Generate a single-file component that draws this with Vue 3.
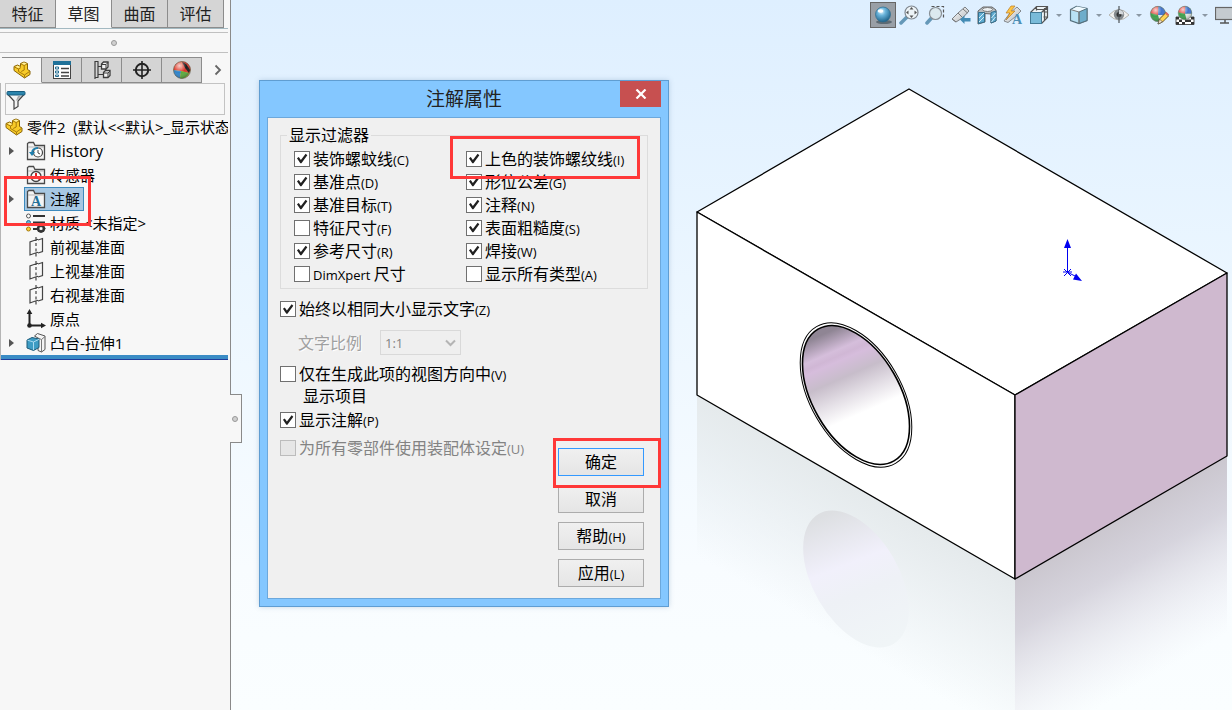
<template>
  <div class="cad-app">
    <!-- набор иконок -->
    <svg class="icon-defs" aria-hidden="true">
      <defs>
        <radialGradient id="ball" cx="0.4" cy="0.3" r="0.75">
          <stop offset="0" stop-color="#e8f8ff" />
          <stop offset="0.35" stop-color="#6bb5dc" />
          <stop offset="1" stop-color="#165a82" />
        </radialGradient>
        <linearGradient id="steel" x1="0" y1="0" x2="1" y2="1">
          <stop offset="0" stop-color="#ffffff" />
          <stop offset="1" stop-color="#b3b7ba" />
        </linearGradient>
        <radialGradient id="shine" cx="0.35" cy="0.25" r="0.8">
          <stop offset="0" stop-color="#fff" stop-opacity="0.75" />
          <stop offset="0.5" stop-color="#fff" stop-opacity="0" />
          <stop offset="1" stop-color="#000" stop-opacity="0.3" />
        </radialGradient>
      </defs>
      <symbol id="part" viewBox="0 0 20 20">
        <path d="M2 6.500L5.500 5l3 1.500V3.500L12 2l3.500 1.500v6L18 11v3.500L12.500 18 2 10.500z" fill="#f8cb28" stroke="#8a6508" />
        <path d="M2.500 7l4 2 2.500-1.500M6.500 9v2.500l6 3.500 5-3.500M12.500 15v2.500M9 4l3.200 1.500L15 4M12.200 5.500V10l-3 1.500" fill="none" stroke="#a77a0c" />
        <path d="M9.500 3.500L12 2.500l2.600 1-2.400 1.300zM3.500 6.700l2-1 2.600 1.300-1.700 1z" fill="#fff0a0" />
      </symbol>
      <symbol id="props" viewBox="0 0 20 20">
        <rect x="1.500" y="1.500" width="17" height="17" fill="#fff" stroke="#444" />
        <rect x="1" y="1" width="18" height="4" fill="#1f7199" />
        <path d="M3.500 7h3v2h-3zM3.500 11h3v2h-3zM3.500 15h3v1.500h-3z" fill="#fff" stroke="#236d91" />
        <path d="M9 8.500h8M9 12.500h8M9 16h8" stroke="#444" stroke-width="1.500" />
      </symbol>
      <symbol id="config" viewBox="0 0 20 20">
        <path d="M3 1v18M3 1.500h3.500M3 17.500h3.500M6 1.500v16M6 6.500h5M6 14.500h5" fill="none" stroke="#3c3c3c" stroke-width="1.200" />
        <path d="M9.500 4l2-2H16v5l-2 2H9.500zM11.500 12.500l2-2H18v5l-2 2h-4.500z" fill="#f2f2f2" stroke="#3c3c3c" stroke-width="1.300" />
        <path d="M10 4.500h4v4M14 4.500l2-2M12 13h4v4M16 13l2-2" fill="none" stroke="#3c3c3c" />
      </symbol>
      <symbol id="target" viewBox="0 0 20 20">
        <circle cx="10" cy="10" r="6.200" fill="none" stroke="#222" stroke-width="2" />
        <path d="M10 1v18M1 10h18" stroke="#222" stroke-width="1.600" />
      </symbol>
      <symbol id="color" viewBox="0 0 20 20">
        <circle cx="10" cy="10" r="8.500" fill="#3e9f4c" />
        <path d="M10 11L1.600 9A8.500 8.500 0 0 1 10.500 1.500z" fill="#e5423a" />
        <path d="M10 11L10.500 1.500A8.500 8.500 0 0 1 18.400 11z" fill="#4173cc" />
        <path d="M10 11h8.400A8.500 8.500 0 0 1 12 18.300z" fill="#e4e6e4" />
        <circle cx="10" cy="10" r="8.500" fill="url(#shine)" stroke="#777" stroke-width="0.600" />
      </symbol>
      <symbol id="appearance" viewBox="0 0 20 20">
        <circle cx="10" cy="10" r="8.500" fill="#f0c43a" />
        <path d="M9 11L1.500 10A8.500 8.500 0 0 1 9.500 1.500z" fill="#df3524" />
        <path d="M9 11L1.500 10A8.500 8.500 0 0 0 8 18.300z" fill="#2f83c9" />
        <path d="M9 11L9.500 1.500A8.500 8.500 0 0 1 18.500 10L17 13z" fill="#d9362a" />
        <path d="M9 11l8 2a8.500 8.500 0 0 1-9 5.500z" fill="#5aaa3d" />
        <path d="M10 2q4 .500 8 8l-1 3Q13 9 10 2z" fill="#1a1a1a" />
        <circle cx="10" cy="10" r="8.500" fill="url(#shine)" stroke="#555" stroke-width="0.600" />
      </symbol>
      <symbol id="filter" viewBox="0 0 20 20">
        <path d="M2 4.500L8 11v8l4-2.500V11l6-6.500z" fill="#f4f4f4" stroke="#444" stroke-width="1.200" />
        <path d="M11 10.500l4-4.500h-3l-2 4.500z" fill="#a8a8a8" />
        <rect x="1" y="1.500" width="18" height="3.500" rx="1" fill="#2c85ad" stroke="#185c7e" />
      </symbol>
      <symbol id="folder" viewBox="0 0 20 20">
        <path d="M1.500 18.500v-16L3 1.500h4.500L9 4.500h9.500v14z" fill="#f4f4f4" stroke="#4a4a4a" stroke-width="1.300" />
        <path d="M2 6h16" stroke="#b5b5b5" />
      </symbol>
      <symbol id="history" viewBox="0 0 20 20">
        <use href="#folder" />
        <circle cx="12" cy="11.500" r="4.500" fill="#fff" stroke="#444" stroke-width="1.200" />
        <path d="M12 9v3l2 1" fill="none" stroke="#444" />
        <path d="M12 7c-4 0-6 2-6 5" fill="none" stroke="#1f7fad" stroke-width="1.800" />
        <path d="M3 11h6l-3 4z" fill="#1f7fad" />
      </symbol>
      <symbol id="sensor" viewBox="0 0 20 20">
        <use href="#folder" />
        <circle cx="10" cy="11.500" r="5" fill="#fff" stroke="#444" stroke-width="1.300" />
        <path d="M10 11.500l4 3M10 8v3" stroke="#d22" stroke-width="2" />
      </symbol>
      <symbol id="material" viewBox="0 0 20 20">
        <path d="M7 3h12M7 9.500h12M7 16h5" stroke="#333" stroke-width="1.800" />
        <circle cx="2.500" cy="3" r="2" fill="#fff" stroke="#555" />
        <circle cx="2.500" cy="9.500" r="2" fill="#64b4d8" stroke="#2a7296" />
        <circle cx="2.500" cy="16" r="2" fill="#ffd034" stroke="#a47c10" />
        <circle cx="15" cy="15.500" r="3" fill="none" stroke="#333" stroke-width="2.600" />
        <path d="M15 10.500v10M10.500 15.500h9M12 12l6 7M18 12l-6 7" stroke="#333" />
        <circle cx="15" cy="15.500" r="1.500" fill="#f7f7f7" />
      </symbol>
      <symbol id="plane" viewBox="0 0 20 20">
        <path d="M8 3.500L4 5v13l4-1.500M12 3l4.500-1.500V14.500L12 16M10 0v4M10 6v3M10 11.500v3M10 16.500v3M8 3.500l4-1.200M8 16.500l4-1.200" fill="none" stroke="#444" stroke-width="1.200" />
      </symbol>
      <symbol id="origin" viewBox="0 0 20 20">
        <path d="M3.500 3v13.500H17" fill="none" stroke="#222" stroke-width="2" />
        <path d="M3.500 0l2.800 5H.7zM20 16.500l-5 2.800v-5.600z" fill="#222" />
        <circle cx="3.500" cy="16.500" r="2.300" fill="#222" />
      </symbol>
      <symbol id="extrude" viewBox="0 0 20 20">
        <path d="M8.500 3l3-2.500L19 3v13.500L15.500 19 12 17.500V5z" fill="#f4f4f4" stroke="#555" />
        <path d="M12 5l3.500 1.500V19M15.500 6.500L19 3.500" fill="none" stroke="#777" />
        <path d="M1 7l5-2.500L13 6v8.500L7.500 17.500 1 15z" fill="#3d9cc4" stroke="#1d5a78" />
        <path d="M1.500 7.200l6 1.800L13 6.300M7.500 9v8" fill="none" stroke="#a9daf0" />
      </symbol>
      <symbol id="sphere" viewBox="0 0 20 20">
        <ellipse cx="11" cy="17" rx="8" ry="2" fill="#5d6a73" />
        <circle cx="10" cy="9.500" r="7.500" fill="url(#ball)" stroke="#2b6c8e" stroke-width="0.700" />
        <ellipse cx="7.500" cy="6" rx="2.800" ry="1.800" fill="#fff" />
      </symbol>
      <symbol id="zoomfit" viewBox="0 0 20 20">
        <path d="M8 12l-6 6" stroke="#6598b8" stroke-width="3.500" stroke-linecap="round" />
        <circle cx="12.500" cy="7.500" r="6.500" fill="#edf4f8" stroke="#808890" stroke-width="1.200" />
        <path d="M12.500 2l2 2.500h-4zM12.500 13l2-2.500h-4zM7 7.500l2.500-2v4zM18 7.500l-2.500-2v4z" fill="#555" />
      </symbol>
      <symbol id="zoomarea" viewBox="0 0 20 20">
        <path d="M6.500 1.500h12v12" fill="none" stroke="#555" stroke-width="1.200" stroke-dasharray="3 2" />
        <path d="M6.500 13l-4.500 5" stroke="#6598b8" stroke-width="3.500" stroke-linecap="round" />
        <circle cx="10.500" cy="8.500" r="6" fill="#dce9ef" stroke="#888f95" stroke-width="1.200" />
      </symbol>
      <symbol id="prevview" viewBox="0 0 20 20">
        <path d="M1 14l6-6 7-6 4 4-6 6.500-7 4.500z" fill="url(#steel)" stroke="#7b7f83" />
        <path d="M7 8l4.500 4.500M12 4l4.500 4M1 14l4 3" stroke="#777" />
        <path d="M9 14.500l4.500-4v2.500h6v3.500h-6V19z" fill="#448cb5" />
      </symbol>
      <symbol id="section" viewBox="0 0 20 20">
        <path d="M1 6l5-4h9l4 3v11l-5 2V9L8 8.500V17l-7 2z" fill="#b9bdc0" stroke="#666" />
        <path d="M1.500 7.500h6V17l-6 1.500zM14 7.500l5-1.500v10l-5 2z" fill="#5eabd0" stroke="#356f8d" />
        <path d="M2 13l5-5M2 17l5-5M14.500 13l4-5M14.500 17l4-5" stroke="#d2edf9" />
        <ellipse cx="10.500" cy="4.500" rx="5" ry="2" fill="#edf1f3" stroke="#777" />
      </symbol>
      <symbol id="annoview" viewBox="0 0 20 20">
        <path d="M1 16l6-8 7-6 4 4-6 6-7 5.500z" fill="url(#steel)" stroke="#85898d" />
        <path d="M8 1L3 8h4l-4 7 9-9H8l4-5z" fill="#ffc543" stroke="#b97c27" stroke-width="0.700" />
      </symbol>
      <symbol id="orient" viewBox="0 0 20 20">
        <path d="M1.500 7.500l6-6h11v11l-6 6M7.500 1.500v4M12.500 7.500l6-6M14.500 7h4M14.500 12h4M15.500 3v12M7.500 4.500h11" fill="#eef5f8" stroke="#555" stroke-width="1.200" />
        <rect x="1.500" y="7.500" width="11" height="11" fill="#79bbd9" stroke="#427994" />
      </symbol>
      <symbol id="display" viewBox="0 0 20 20">
        <path d="M1.500 4.500l6-3L18 3.500v12l-8 3-8.500-3z" fill="#b8e1f4" stroke="#55707d" stroke-width="1.200" />
        <path d="M2 5l8 2 8-3.500-10-2z" fill="#effaff" />
        <path d="M10 7l8-3.500v12l-8 3z" fill="#6eadcb" stroke="#55707d" />
        <path d="M1.500 4.500L10 7v11.500" fill="none" stroke="#777" />
      </symbol>
      <symbol id="eye" viewBox="0 0 20 20">
        <path d="M0 10Q10-1 20 10 10 20 0 10z" fill="#f1f1ef" stroke="#b5b5b0" />
        <circle cx="10" cy="9.500" r="5.200" fill="#858b8e" />
        <circle cx="10" cy="9.500" r="2.500" fill="#333" />
        <path d="M10 1v17" stroke="#4e5459" stroke-width="1.200" />
        <path d="M10 5a4.500 4.500 0 0 1 4.500 4.500L10 9z" fill="#d6dadc" />
      </symbol>
      <symbol id="paint" viewBox="0 0 20 20">
        <svg x="0" y="0" width="18" height="18" viewBox="0 0 20 20"><use href="#color" /></svg>
        <path d="M9 19l1.500-5L17 7.500l3 3L13.500 17z" fill="#ffd353" stroke="#6c5520" />
        <path d="M9 19l1.500-5 3 3z" fill="#f9e5c8" stroke="#555" stroke-width="0.700" />
        <path d="M16 8.500l1.500-1.500 2.500 2.500-1.500 1.500z" fill="#dd6c63" />
      </symbol>
      <symbol id="scene" viewBox="0 0 20 20">
        <path d="M1 12h18v7.500H1z" fill="#fff" stroke="#555" />
        <path d="M1 12h3v2.500H1zM16 12h3v2.500h-3zM4 14.500h3V17H4zM13 14.500h3V17h-3zM1 17h3v2.500H1zM7 17h3v2.500H7zM16 17h3v2.500h-3zM10 14.500h3V17h-3z" fill="#333" />
        <svg x="2" y="0" width="16" height="16" viewBox="0 0 20 20"><use href="#color" /></svg>
      </symbol>
      <symbol id="monitor" viewBox="0 0 20 20">
        <rect x="0.500" y="2.500" width="19" height="12" fill="#c5cbd0" stroke="#666" stroke-width="1.200" />
        <path d="M10 15v3M5 18h9" stroke="#555" stroke-width="1.500" />
      </symbol>
    </svg>

    <aside class="sidebar">
      <nav class="ribbon-tabs">
        <button v-for="tab in ribbonTabs" :key="tab" class="ribbon-tab" :class="{ active: tab === activeRibbon }" @click="activeRibbon = tab">{{ tab }}</button>
      </nav>
      <div class="grip"><span class="dot"></span></div>

      <nav class="manager-tabs">
        <button v-for="tab in managerTabs" :key="tab" class="manager-tab" :class="{ active: tab === activeManager }" :aria-label="tab" @click="activeManager = tab">
          <svg class="icon"><use :href="'#' + tab" /></svg>
        </button>
        <button class="more-tabs" aria-label="more">
          <svg width="8" height="12" viewBox="0 0 8 12"><path d="M1.500 1.500L6 6l-4.500 4.500" fill="none" stroke="#666" stroke-width="1.800" /></svg>
        </button>
      </nav>

      <div class="tree-panel">
        <div class="tree-filter"><svg class="icon"><use href="#filter" /></svg></div>
        <div class="tree-root">
          <svg class="icon"><use href="#part" /></svg>
          <span>零件2&nbsp; (默认&lt;&lt;默认&gt;_显示状态</span>
        </div>
        <ul class="tree">
          <li v-for="item in treeItems" :key="item.text" class="tree-item">
            <button v-if="item.expandable" class="expander" aria-label="expand"></button>
            <span v-else class="expander-space"></span>
            <span class="tree-label" :class="{ selected: item.selected, latin: item.latin }">
              <svg class="icon" viewBox="0 0 20 20">
                <use :href="'#' + item.icon" />
                <text v-if="item.letter" x="10" y="17" text-anchor="middle" class="icon-letter">{{ item.letter }}</text>
              </svg>
              <span>{{ item.text }}</span>
            </span>
            <span v-if="item.selected" class="mark mark-tree"></span>
          </li>
        </ul>
        <div class="rollback-bar"></div>
      </div>
      <button class="collapse-handle" aria-label="collapse"><span class="dot"></span></button>
    </aside>

    <main class="viewport">
      <svg class="model" viewBox="231 0 1001 710" preserveAspectRatio="xMaxYMin meet">
        <defs>
          <!-- эллипсы повёрнуты на 60°, поэтому градиенты поворачиваем обратно -->
          <linearGradient id="hole" gradientUnits="userSpaceOnUse" x1="830" y1="327" x2="870" y2="418" gradientTransform="rotate(-60 856 395)">
            <stop offset="0.040" stop-color="#8f8594" />
            <stop offset="0.240" stop-color="#d5bedb" />
            <stop offset="0.300" stop-color="#d0b7d5" />
            <stop offset="0.350" stop-color="#d6bddc" />
            <stop offset="0.520" stop-color="#c7bdca" />
            <stop offset="0.720" stop-color="#e4dfe6" />
            <stop offset="0.920" stop-color="#ffffff" />
          </linearGradient>
          <linearGradient id="reflectLeft" gradientUnits="userSpaceOnUse" x1="697" y1="395" x2="627" y2="516">
            <stop offset="0" stop-color="#e5eaec" />
            <stop offset="1" stop-color="#e5eaec" stop-opacity="0" />
          </linearGradient>
          <linearGradient id="reflectRight" gradientUnits="userSpaceOnUse" x1="1015" y1="579" x2="1092" y2="712">
            <stop offset="0" stop-color="#cbc7cf" />
            <stop offset="0.300" stop-color="#cbc7d2" stop-opacity="0.750" />
            <stop offset="1" stop-color="#e5e3ec" stop-opacity="0" />
          </linearGradient>
          <linearGradient id="reflectHole" gradientUnits="userSpaceOnUse" x1="828" y1="514" x2="880" y2="646" gradientTransform="rotate(-60 856 579)">
            <stop offset="0" stop-color="#dddfe2" />
            <stop offset="0.380" stop-color="#f1f0fb" />
            <stop offset="0.600" stop-color="#eef1f6" />
            <stop offset="1" stop-color="#f0f5f7" />
          </linearGradient>
        </defs>
        <polygon points="697,395 1015,579 1015,710 697,710" fill="url(#reflectLeft)" />
        <polygon points="1015,579 1227,456 1227,710 1015,710" fill="url(#reflectRight)" />
        <ellipse cx="856" cy="579" rx="75" ry="43" transform="rotate(60 856 579)" fill="url(#reflectHole)" />
        <g stroke="#000" stroke-width="1.300" stroke-linejoin="round">
          <polygon points="909,89 1227,273 1015,395 697,212" fill="#fff" />
          <polygon points="697,212 1015,395 1015,579 697,395" fill="#fff" />
          <polygon points="1015,395 1227,273 1227,456 1015,579" fill="#cfb9cf" />
        </g>
        <ellipse cx="856" cy="395" rx="79" ry="45.500" transform="rotate(60 856 395)" fill="#fff" stroke="#000" />
        <ellipse cx="856" cy="395" rx="76" ry="43.500" transform="rotate(60 856 395)" fill="url(#hole)" stroke="#000" stroke-width="1.600" />
        <g stroke="#0000f0" fill="#0000f0">
          <path d="M1067.500 272V246M1067 272l10 5M1063 272h9M1064 269l7 7M1071 269l-7 7" fill="none" />
          <path d="M1067.500 239l3.500 9h-7zM1082 281l-9-1.500 3-6z" stroke="none" />
        </g>
      </svg>

      <div class="view-toolbar">
        <template v-for="tool in viewTools" :key="tool.icon">
          <button class="tool" :class="{ pressed: tool.pressed }" :aria-label="tool.icon">
            <svg class="icon" viewBox="0 0 20 20">
              <use :href="'#' + tool.icon" />
              <text v-if="tool.letter" x="14" y="19" text-anchor="middle" class="icon-letter tool-letter">{{ tool.letter }}</text>
            </svg>
          </button>
          <button v-if="tool.menu" class="tool-menu" aria-label="menu"></button>
        </template>
      </div>

      <section v-if="dialogOpen" class="dialog" role="dialog" aria-labelledby="dialog-title">
        <header class="dialog-header">
          <h1 id="dialog-title" class="dialog-title">注解属性</h1>
          <button class="dialog-close" aria-label="close" @click="dialogOpen = false">
            <svg width="12" height="10" viewBox="0 0 12 10"><path d="M1.500 0.500l9 9M10.500 0.500l-9 9" stroke="#fff" stroke-width="2.200" /></svg>
          </button>
        </header>
        <div class="dialog-body">
          <fieldset class="filters">
            <legend>显示过滤器</legend>
            <div class="filter-grid">
              <label v-for="item in filters" :key="item.text" class="check">
                <input v-model="item.checked" type="checkbox" />
                <span><small v-if="item.prefix">{{ item.prefix }}&nbsp;</small>{{ item.text }}<small v-if="item.hotkey">({{ item.hotkey }})</small></span>
                <span v-if="item.marked" class="mark mark-filter"></span>
              </label>
            </div>
          </fieldset>

          <div class="dialog-columns">
            <div class="options">
              <label class="check">
                <input v-model="sameSize" type="checkbox" />
                <span>始终以相同大小显示文字<small>(Z)</small></span>
              </label>
              <div class="scale-row">
                <label for="text-scale">文字比例</label>
                <div class="select-wrap">
                  <select id="text-scale" disabled>
                    <option>1:1</option>
                  </select>
                  <svg width="11" height="8" viewBox="0 0 11 8"><path d="M1 1.500l4.500 4.500L10 1.500" fill="none" stroke="#b4b4b4" stroke-width="2" /></svg>
                </div>
              </div>
              <label class="check two-line">
                <input v-model="viewOnly" type="checkbox" />
                <span>仅在生成此项的视图方向中<small>(V)</small><span class="second-line">显示项目</span></span>
              </label>
              <label class="check">
                <input v-model="showNotes" type="checkbox" />
                <span>显示注解<small>(P)</small></span>
              </label>
              <label class="check disabled">
                <input type="checkbox" disabled />
                <span>为所有零部件使用装配体设定<small>(U)</small></span>
              </label>
            </div>
            <div class="actions">
              <button v-for="action in actions" :key="action.text" class="action" :class="{ primary: action.primary }">
                {{ action.text }}<small v-if="action.hotkey">({{ action.hotkey }})</small>
                <span v-if="action.primary" class="mark mark-action"></span>
              </button>
            </div>
          </div>
        </div>
      </section>
    </main>
  </div>
</template>

<script setup>
import { ref } from 'vue'

const ribbonTabs = ['特征', '草图', '曲面', '评估']
const activeRibbon = ref('草图')

const managerTabs = ['part', 'props', 'config', 'target', 'appearance']
const activeManager = ref('part')

const treeItems = [
  { icon: 'history', text: 'History', latin: true, expandable: true },
  { icon: 'sensor', text: '传感器' },
  { icon: 'folder', letter: 'A', text: '注解', expandable: true, selected: true },
  { icon: 'material', text: '材质 <未指定>' },
  { icon: 'plane', text: '前视基准面' },
  { icon: 'plane', text: '上视基准面' },
  { icon: 'plane', text: '右视基准面' },
  { icon: 'origin', text: '原点' },
  { icon: 'extrude', text: '凸台-拉伸1', expandable: true }
]

const viewTools = [
  { icon: 'sphere', pressed: true },
  { icon: 'zoomfit' },
  { icon: 'zoomarea' },
  { icon: 'prevview' },
  { icon: 'section' },
  { icon: 'annoview', letter: 'A' },
  { icon: 'orient', menu: true },
  { icon: 'display', menu: true },
  { icon: 'eye', menu: true },
  { icon: 'paint' },
  { icon: 'scene', menu: true },
  { icon: 'monitor' }
]

// порядок: левая колонка сверху вниз, затем правая
const filters = ref([
  { text: '装饰螺蚊线', hotkey: 'C', checked: true },
  { text: '基准点', hotkey: 'D', checked: true },
  { text: '基准目标', hotkey: 'T', checked: true },
  { text: '特征尺寸', hotkey: 'F', checked: false },
  { text: '参考尺寸', hotkey: 'R', checked: true },
  { prefix: 'DimXpert', text: '尺寸', checked: false },
  { text: '上色的装饰螺纹线', hotkey: 'I', checked: true, marked: true },
  { text: '形位公差', hotkey: 'G', checked: true },
  { text: '注释', hotkey: 'N', checked: true },
  { text: '表面粗糙度', hotkey: 'S', checked: true },
  { text: '焊接', hotkey: 'W', checked: true },
  { text: '显示所有类型', hotkey: 'A', checked: false }
])

const actions = [
  { text: '确定', primary: true },
  { text: '取消' },
  { text: '帮助', hotkey: 'H' },
  { text: '应用', hotkey: 'L' }
]

const dialogOpen = ref(true)
const sameSize = ref(true)
const viewOnly = ref(false)
const showNotes = ref(true)
</script>

<style>
body {
  margin: 0;
}
</style>

<style scoped>
.cad-app {
  display: flex;
  min-height: 100vh;
  font-family: 'Open Sans', 'Noto Sans CJK SC', sans-serif;
  font-size: 16px;
  line-height: 22px;
  color: #000;
}

.cad-app *,
.cad-app *::before {
  box-sizing: border-box;
}

button {
  padding: 0;
  border: 0;
  background: none;
  font: inherit;
  color: inherit;
}

.icon-defs {
  position: absolute;
  width: 0;
  height: 0;
}

.icon {
  width: 20px;
  height: 20px;
  flex: none;
}

.icon-letter {
  font-family: 'Liberation Serif', serif;
  font-size: 14px;
  font-weight: 700;
  fill: #236f98;
}

.tool-letter {
  fill: #4d8fb6;
}

.dot {
  width: 6px;
  height: 6px;
  border: 1px solid #999;
  border-radius: 50%;
  background: #d0d0d0;
}

/* левая панель */
.sidebar {
  position: relative;
  width: 231px;
  flex: none;
  border-right: 1px solid #8a8a8a;
  background: #f7f7f7;
}

.ribbon-tabs {
  display: flex;
  height: 29px;
  margin-right: 2px;
  border-bottom: 1px solid #a3b9c1;
}

.ribbon-tab {
  width: 56px;
  border-right: 1px solid #8c8c8c;
  border-bottom: 1px solid #8c8c8c;
  background: #d5d5d5;
  color: #222;
}

.ribbon-tab.active {
  background: #f7f7f7;
  border-bottom-color: #f7f7f7;
}

.grip {
  display: flex;
  align-items: center;
  justify-content: center;
  height: 21px;
  margin: 3px 2px 0 0;
  border-top: 1px solid #c0c0c0;
  border-bottom: 1px solid #c0c0c0;
}

.manager-tabs {
  display: flex;
  height: 26px;
  margin: 4px 2px 0 2px;
}

.manager-tab {
  display: flex;
  align-items: center;
  justify-content: center;
  width: 40px;
  border: 1px solid #8c8c8c;
  border-left: 0;
  background: #d4d4d4;
}

.manager-tab.active {
  border-bottom-color: transparent;
  background: #f7f7f7;
}

.more-tabs {
  flex: 1;
  padding-left: 6px;
}

.tree-panel {
  padding-right: 2px;
  border-left: 1px solid #b5b5b5;
}

.tree-filter {
  height: 32px;
  margin: 0 3px 0 4px;
  padding: 6px 0;
  border: 1px solid #c3c3c3;
}

.tree-root {
  display: flex;
  align-items: center;
  gap: 3px;
  height: 24px;
  padding-left: 3px;
  overflow: hidden;
  font-size: 15px;
  white-space: nowrap;
}

.tree {
  margin: 0;
  padding: 0;
  list-style: none;
  font-size: 15px;
}

.tree-item {
  position: relative;
  display: flex;
  align-items: center;
  height: 24px;
}

.expander,
.expander-space {
  width: 5px;
  height: 8px;
  margin: 0 10px 0 8px;
}

.expander {
  background: #555;
  clip-path: polygon(0 0, 100% 50%, 0 100%);
}

.tree-label {
  display: flex;
  align-items: center;
  gap: 4px;
  height: 24px;
  padding: 0 3px 0 1px;
  border: 1px solid transparent;
  white-space: nowrap;
}

.tree-label.latin {
  font-size: 16px;
}

.tree-label.selected {
  border-color: #3d8abd;
  background: #a7c8e3;
}

.rollback-bar {
  height: 5px;
  border-bottom: 1px solid #1f3d9c;
  background: #3a8cc5;
}

.collapse-handle {
  position: absolute;
  top: 394px;
  right: -12px;
  z-index: 1;
  display: flex;
  align-items: center;
  padding-left: 2px;
  width: 12px;
  height: 49px;
  border: 1px solid #8a8a8a;
  border-left: 0;
  background: #f7f7f7;
}

/* красные рамки */
.mark {
  position: absolute;
  z-index: 2;
  border: 3px solid #ff3838;
  pointer-events: none;
}

.mark-tree {
  top: -11px;
  left: 3px;
  width: 87px;
  height: 50px;
}

.mark-filter {
  top: -11px;
  left: -16px;
  width: 190px;
  height: 43px;
}

.mark-action {
  inset: -11px -18px -13px -6px;
}

/* рабочая область */
.viewport {
  position: relative;
  flex: 1;
  min-width: 0;
  background: linear-gradient(#deefff, #edf7ff 45%, #f8fcff 80%, #fafeff);
}

.model {
  position: absolute;
  inset: 0;
  width: 100%;
  height: 100%;
}

.view-toolbar {
  position: relative;
  display: flex;
  justify-content: flex-end;
  height: 30px;
  padding-top: 2px;
  overflow: hidden;
}

.tool {
  display: flex;
  align-items: center;
  justify-content: center;
  width: 26px;
  height: 26px;
  flex: none;
}

.tool:last-child {
  margin-right: -6px;
}

.tool.pressed {
  border: 1px solid #666;
  background: #999fa6;
}

.tool-menu {
  display: flex;
  align-items: center;
  justify-content: center;
  width: 14px;
  height: 26px;
  flex: none;
}

.tool-menu::before {
  content: '';
  border: 3px solid transparent;
  border-top-color: #8b98a4;
  border-bottom: 0;
}

/* диалог */
.dialog {
  position: absolute;
  top: 80px;
  left: 28px;
  width: 410px;
  padding: 0 7px 7px;
  border: 1px solid #5f9dd2;
  background: #84c7ff;
  box-shadow: 0 0 5px rgba(90, 130, 170, 0.3);
}

.dialog-header {
  position: relative;
  height: 36px;
}

.dialog-title {
  margin: 0;
  font-size: 19px;
  font-weight: 400;
  line-height: 36px;
  text-align: center;
  color: #222;
}

.dialog-close {
  display: flex;
  align-items: center;
  justify-content: center;
  position: absolute;
  top: 0;
  right: 0;
  width: 41px;
  height: 26px;
  background: #c75050;
}

.dialog-body {
  padding: 6px 12px 11px;
  border: 1px solid #6ca8dc;
  background: #f0f0f0;
}

small {
  font-size: 13px;
  line-height: 1;
}

.filters {
  min-width: 0;
  margin: 0;
  padding: 0;
  border: 1px solid #dcdcdc;
}

.filters legend {
  margin-left: 6px;
  padding: 0 2px;
}

.filter-grid {
  display: grid;
  grid-template-columns: 172px 1fr;
  grid-template-rows: repeat(6, 23px);
  grid-auto-flow: column;
  padding: 1px 0 3px 13px;
}

.check {
  position: relative;
  display: flex;
  align-items: center;
  gap: 3px;
  white-space: nowrap;
}

.check input {
  appearance: none;
  width: 16px;
  height: 16px;
  margin: 0;
  flex: none;
  border: 1px solid #707070;
  background: #fff;
}

.check input:checked::before {
  content: '';
  display: block;
  width: 14px;
  height: 14px;
  background: #212121;
  clip-path: polygon(14% 48%, 27% 40%, 42% 60%, 76% 16%, 88% 27%, 46% 84%, 38% 84%);
}

.check input:disabled {
  border-color: #bcbcbc;
  background: #e6e6e6;
}

.check.disabled {
  margin-top: 4px;
  color: #838383;
}

.dialog-columns {
  display: flex;
  justify-content: space-between;
  padding: 9px 4px 0 0;
}

.options {
  display: flex;
  flex-direction: column;
  gap: 2px;
}

.scale-row {
  display: flex;
  align-items: center;
  gap: 18px;
  margin: 8px 0 6px 18px;
  line-height: 20px;
  color: #a0a0a0;
  text-shadow: 1px 1px 0 #fff;
}

.select-wrap {
  position: relative;
}

.select-wrap select {
  appearance: none;
  display: block;
  width: 81px;
  height: 25px;
  padding: 0 4px;
  border: 1px solid #d9d9d9;
  border-radius: 0;
  background: #efefef;
  color: #838383;
  font: inherit;
  font-size: 13px;
  opacity: 1;
}

.select-wrap svg {
  position: absolute;
  top: 9px;
  right: 5px;
}

.two-line {
  align-items: flex-start;
}

.two-line input {
  margin-top: 3px;
}

.second-line {
  display: block;
  padding-left: 4px;
}

.actions {
  display: flex;
  flex-direction: column;
  align-self: flex-end;
  gap: 9px;
  margin-top: 150px;
}

.action {
  position: relative;
  width: 86px;
  height: 28px;
  border: 1px solid #acacac;
  background: linear-gradient(#f0f0f0, #e5e5e5);
}

.action.primary {
  border-color: #3399ff;
}
</style>
